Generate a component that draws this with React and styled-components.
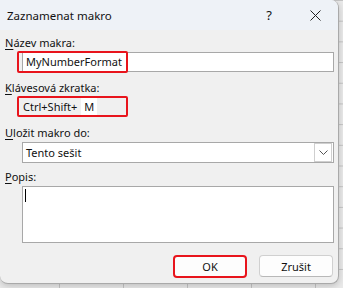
import styled, { createGlobalStyle } from 'styled-components'

const GlobalStyle = createGlobalStyle`
  html, body {
    margin: 0;
    padding: 0;
  }
  body {
    width: 343px;
    height: 288px;
    overflow: hidden;
    font-family: "Noto Sans", "Open Sans", sans-serif;
    background-color: #e9e9e9;
    background-image:
      linear-gradient(to right, #c4c4c4 1px, transparent 1px),
      linear-gradient(to bottom, #c4c4c4 1px, transparent 1px);
    background-size: 64px 20.7px;
    background-position: 59px 0, 0 0;
  }
`

const Dialog = styled.div`
  width: 338px;
  height: 283px;
  background: #f0f0f0;
  border: 1px solid #a9a9a9;
  border-left: none;
  border-top: none;
  border-radius: 0 8px 8px 8px;
  box-shadow: 0 2px 6px rgba(0, 0, 0, 0.18);
  display: flex;
  flex-direction: column;
  overflow: hidden;
  color: #111;
  font-size: 11px;
`

const TitleBar = styled.div`
  height: 30px;
  flex-shrink: 0;
  background: #eef2f7;
  display: flex;
  align-items: center;
  padding-left: 7px;
  font-size: 11.5px;
`

const Title = styled.span`
  flex: 1;
`

const TitleButton = styled.span`
  width: 46px;
  display: flex;
  justify-content: center;
  align-items: center;
  font-size: 13px;
`

const Body = styled.div`
  flex: 1;
  display: flex;
  flex-direction: column;
  padding: 5px 5px 0 5px;
`

const Label = styled.div`
  height: 16px;
  line-height: 16px;
  margin-top: ${(p) => p.$gap || 0}px;
  & u {
    text-decoration: underline;
    text-underline-offset: 2px;
  }
`

const FieldWrap = styled.div`
  position: relative;
  margin-left: 17px;
  margin-top: 1px;
`

const TextInput = styled.div`
  height: 18px;
  width: 307px;
  background: #fff;
  border: 1px solid #a8a8a8;
  padding-left: 3px;
  line-height: 18px;
`

const Highlight = styled.div`
  position: absolute;
  left: ${(p) => p.$left}px;
  top: ${(p) => p.$top}px;
  width: 111px;
  height: ${(p) => p.$h}px;
  box-sizing: border-box;
  border: 2px solid #e8141c;
  border-radius: 2px;
  pointer-events: none;
`

const ShortcutRow = styled.div`
  position: relative;
  display: flex;
  align-items: center;
  height: 21px;
  margin-left: 12px;
  padding-left: 6px;
`

const KeyText = styled.span``

const KeyBox = styled.span`
  width: 16px;
  height: 17px;
  line-height: 17px;
  background: #fff;
  margin-left: 4px;
  text-align: center;
`

const Select = styled.div`
  height: 19px;
  width: 310px;
  background: #fff;
  border: 1px solid #a8a8a8;
  margin-left: 17px;
  margin-top: 1px;
  display: flex;
  align-items: center;
`

const SelectValue = styled.span`
  flex: 1;
  padding-left: 3px;
`

const DropButton = styled.span`
  width: 16px;
  height: 17px;
  margin-right: 1px;
  border: 1px solid #cfcfcf;
  display: flex;
  align-items: center;
  justify-content: center;
`

const TextArea = styled.div`
  height: 55px;
  width: 310px;
  background: #fff;
  border: 1px solid #a8a8a8;
  margin-left: 17px;
  margin-top: 1px;
  position: relative;
`

const Caret = styled.span`
  position: absolute;
  left: 2px;
  top: 2px;
  width: 1px;
  height: 13px;
  background: #000;
`

const ButtonRow = styled.div`
  display: flex;
  justify-content: flex-end;
  gap: 12px;
  margin-top: 12px;
`

const Button = styled.div`
  width: ${(p) => (p.$focus ? 70 : 72)}px;
  height: ${(p) => (p.$focus ? 19 : 20)}px;
  background: #fdfdfd;
  border: ${(p) => (p.$focus ? '2px solid #e8141c' : '1px solid #d0d0d0')};
  border-bottom-color: ${(p) => (p.$focus ? '#e8141c' : '#b8b8b8')};
  border-radius: 4px;
  display: flex;
  align-items: center;
  justify-content: center;
  font-size: 11px;
`

export default function App() {
  return (
    <>
      <GlobalStyle />
      <Dialog>
        <TitleBar>
          <Title>Zaznamenat makro</Title>
          <TitleButton>?</TitleButton>
          <TitleButton>
            <svg width="11" height="11" viewBox="0 0 11 11">
              <path d="M0.5 0.5 L10.5 10.5 M10.5 0.5 L0.5 10.5" stroke="#222" strokeWidth="1" />
            </svg>
          </TitleButton>
        </TitleBar>
        <Body>
          <Label><u>N</u>ázev makra:</Label>
          <FieldWrap>
            <TextInput>MyNumberFormat</TextInput>
            <Highlight $left={-5} $top={-1} $h={22} />
          </FieldWrap>
          <Label $gap={8}><u>K</u>lávesová zkratka:</Label>
          <ShortcutRow>
            <KeyText>Ctrl+Shift+</KeyText>
            <KeyBox>M</KeyBox>
            <Highlight $left={0} $top={0} $h={21} />
          </ShortcutRow>
          <Label $gap={8}><u>U</u>ložit makro do:</Label>
          <Select>
            <SelectValue>Tento sešit</SelectValue>
            <DropButton>
              <svg width="9" height="5" viewBox="0 0 9 5">
                <path d="M0.5 0.5 L4.5 4.5 L8.5 0.5" stroke="#555" fill="none" strokeWidth="1" />
              </svg>
            </DropButton>
          </Select>
          <Label $gap={6}><u>P</u>opis:</Label>
          <TextArea>
            <Caret />
          </TextArea>
          <ButtonRow>
            <Button $focus>OK</Button>
            <Button>Zrušit</Button>
          </ButtonRow>
        </Body>
      </Dialog>
    </>
  )
}
